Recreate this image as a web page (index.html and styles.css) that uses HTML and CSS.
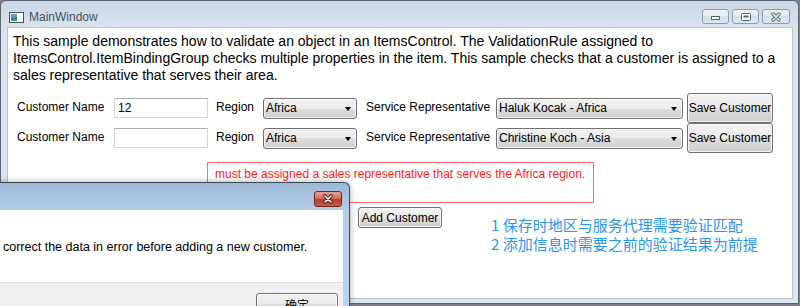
FILE: index.html
```html
<!DOCTYPE html>
<html lang="zh-CN">
<head>
    <meta charset="UTF-8">
    <title>MainWindow</title>
    <link rel="stylesheet" href="styles.css">
</head>
<body>
    <div class="main-window">
        <div class="title-bar">
            <svg class="app-icon" width="15" height="11" viewBox="0 0 15 11">
                <rect x="0.5" y="0.5" width="14" height="10" fill="#fff" stroke="#4d4d4d"/>
                <rect x="2" y="2" width="6" height="7" fill="#3f8f6e"/>
                <rect x="2" y="2" width="6" height="3" fill="#5c9fd6"/>
            </svg>
            <span class="window-title">MainWindow</span>
            <div class="caption-buttons">
                <span class="caption-btn">
                    <svg width="25" height="13"><rect x="8.5" y="6.5" width="8" height="3" fill="#fff" stroke="#56606e"/></svg>
                </span>
                <span class="caption-btn">
                    <svg width="25" height="13"><rect x="8.5" y="3.5" width="9" height="7" rx="1" fill="#fff" stroke="#56606e"/><rect x="10.5" y="5.5" width="5" height="2" fill="#56606e"/></svg>
                </span>
                <span class="caption-btn close">
                    <svg width="26" height="13">
                        <path d="M10 4L16 10M16 4L10 10" stroke="#5f6a78" stroke-width="3.4" stroke-linecap="round"/>
                        <path d="M10 4L16 10M16 4L10 10" stroke="#fff" stroke-width="1.4" stroke-linecap="round"/>
                    </svg>
                </span>
            </div>
        </div>
        <div class="client">
            <p class="intro">This sample demonstrates how to validate an object in an ItemsControl. The ValidationRule assigned to<br>ItemsControl.ItemBindingGroup checks multiple properties in the item. This sample checks that a customer is assigned to a<br>sales representative that serves their area.</p>
            <div class="customer-row">
                <span class="field-label name-label">Customer Name</span>
                <div class="text-input">12</div>
                <span class="field-label region-label">Region</span>
                <div class="combo region-combo">Africa</div>
                <span class="field-label rep-label">Service Representative</span>
                <div class="combo rep-combo">Haluk Kocak - Africa</div>
                <button class="btn save-btn">Save Customer</button>
            </div>
            <div class="customer-row">
                <span class="field-label name-label">Customer Name</span>
                <div class="text-input"></div>
                <span class="field-label region-label">Region</span>
                <div class="combo region-combo">Africa</div>
                <span class="field-label rep-label">Service Representative</span>
                <div class="combo rep-combo">Christine Koch - Asia</div>
                <button class="btn save-btn">Save Customer</button>
            </div>
            <div class="error-box">must be assigned a sales representative that serves the Africa region.</div>
            <div class="actions">
                <button class="btn add-btn">Add Customer</button>
                <div class="notes">
                    <div>1 保存时地区与服务代理需要验证匹配</div>
                    <div>2 添加信息时需要之前的验证结果为前提</div>
                </div>
            </div>
        </div>
    </div>

    <div class="dialog">
        <div class="dialog-title-bar">
            <span class="dialog-close">
                <svg width="26" height="14">
                    <path d="M10 4L16 10M16 4L10 10" stroke="#4a1a12" stroke-width="3.6" stroke-linecap="round"/>
                    <path d="M10 4L16 10M16 4L10 10" stroke="#fff" stroke-width="1.6" stroke-linecap="round"/>
                </svg>
            </span>
        </div>
        <div class="dialog-client">
            <div class="dialog-message">correct the data in error before adding a new customer.</div>
            <div class="dialog-footer">
                <button class="btn ok-btn">确定</button>
            </div>
        </div>
    </div>
</body>
</html>
```

FILE: styles.css
```css
body {
    margin: 0;
    width: 800px;
    height: 306px;
    overflow: hidden;
    position: relative;
    background: #7b7f86;
    font-family: "Liberation Sans", Arial, "Noto Sans CJK SC", sans-serif;
    color: #000;
}
.main-window {
    width: 799px;
    height: 304px;
    box-sizing: border-box;
    border: 1px solid #5d6670;
    border-radius: 6px 6px 0 0;
    background: linear-gradient(#c9d6e5, #d9e4f0 27px, #dde7f2);
    padding: 0 6px 5px 7px;
    display: flex;
    flex-direction: column;
}
.title-bar {
    height: 27px;
    box-sizing: border-box;
    margin: 0 -6px 0 -7px;
    padding: 8px 8px 0 8px;
    display: flex;
    align-items: flex-start;
}
.app-icon {
    margin-top: 3px;
    margin-right: 5px;
}
.window-title {
    font-size: 12px;
    line-height: 16px;
    color: #4b5360;
}
.caption-buttons {
    margin-left: auto;
    display: flex;
    gap: 3px;
}
.caption-btn {
    width: 27px;
    height: 15px;
    box-sizing: border-box;
    border: 1px solid #8d9cae;
    border-radius: 3px;
    background: linear-gradient(#eef3f8, #e2e9f1 50%, #d5dfea 50%, #dde6ef);
    display: flex;
}
.caption-btn.close {
    width: 28px;
}
.client {
    flex: 1;
    background: #fff;
    box-shadow: 0 0 0 1px #b7c4d3;
}
.intro {
    margin: 5px 0 9px;
    padding-left: 5px;
    font-size: 14px;
    line-height: 17px;
}
.customer-row {
    display: flex;
    align-items: center;
    height: 30px;
    padding-left: 9px;
    font-size: 12px;
}
.field-label {
    padding-bottom: 2px;
    line-height: 16px;
}
.name-label {
    width: 97px;
}
.region-label {
    margin-left: 8px;
    width: 47px;
}
.rep-label {
    margin-left: 9px;
    width: 130px;
}
.text-input {
    width: 94px;
    height: 20px;
    box-sizing: border-box;
    border: 1px solid #d3d7de;
    border-top-color: #abadb3;
    padding: 0 3px;
    line-height: 18px;
    font-size: 12px;
}
.combo {
    position: relative;
    height: 21px;
    box-sizing: border-box;
    border: 1px solid #707070;
    border-radius: 3px;
    background: linear-gradient(#f2f2f2, #ebebeb 50%, #dddddd 50%, #cfcfcf);
    box-shadow: inset 0 0 0 1px rgba(255, 255, 255, 0.7);
    padding-left: 2px;
    line-height: 19px;
    font-size: 12px;
}
.combo::after {
    content: "";
    position: absolute;
    right: 5px;
    top: 8px;
    border-left: 3px solid transparent;
    border-right: 3px solid transparent;
    border-top: 4px solid #000;
}
.region-combo {
    width: 94px;
}
.rep-combo {
    width: 187px;
}
.btn {
    font: inherit;
    font-size: 12px;
    color: #000;
    border: 1px solid #707070;
    border-radius: 3px;
    background: linear-gradient(#f2f2f2, #ebebeb 50%, #dddddd 50%, #cfcfcf);
    box-shadow: inset 0 0 0 1px rgba(255, 255, 255, 0.75);
    padding: 0;
}
.save-btn {
    margin-left: 4px;
    width: 86px;
    height: 30px;
}
.error-box {
    margin: 9px 0 0 199px;
    width: 387px;
    height: 41px;
    box-sizing: border-box;
    border: 1px solid #ff6b6b;
    padding: 4px 0 0 7px;
    color: #ff2020;
    font-size: 12px;
    line-height: 15px;
}
.actions {
    display: flex;
    align-items: flex-start;
    margin-top: 4px;
    padding-left: 350px;
}
.add-btn {
    width: 84px;
    height: 21px;
}
.notes {
    margin: 8px 0 0 49px;
    font-family: "Noto Sans CJK SC", sans-serif;
    font-size: 15px;
    line-height: 19px;
    color: #2b95ef;
}
.dialog {
    position: absolute;
    left: -8px;
    top: 182px;
    width: 358px;
    height: 124px;
    overflow: hidden;
    box-sizing: border-box;
    border: 1px solid #3f4a57;
    border-bottom: 0;
    border-radius: 0 6px 0 0;
    background: linear-gradient(#9bb7d6, #b6cde6 27px, #bcd2ea);
    padding: 0 6px 0 7px;
    box-shadow: 0 0 6px rgba(0, 0, 0, 0.35);
}
.dialog-title-bar {
    height: 27px;
    box-sizing: border-box;
    padding-top: 8px;
    display: flex;
    justify-content: flex-end;
}
.dialog-close {
    width: 28px;
    height: 16px;
    margin-right: 1px;
    box-sizing: border-box;
    border: 1px solid #6e2a20;
    border-radius: 3px;
    background: linear-gradient(#e3a397, #d0705f 45%, #b8412e 55%, #c75a45);
    display: flex;
}
.dialog-client {
    background: #fff;
}
.dialog-message {
    height: 72px;
    box-sizing: border-box;
    padding: 29px 0 0 3px;
    font-size: 12.5px;
    line-height: 16px;
}
.dialog-footer {
    background: #f0f0f0;
    border-top: 1px solid #dfdfdf;
    padding: 10px 5px 10px 0;
    display: flex;
    justify-content: flex-end;
}
.ok-btn {
    width: 82px;
    height: 23px;
}
```
